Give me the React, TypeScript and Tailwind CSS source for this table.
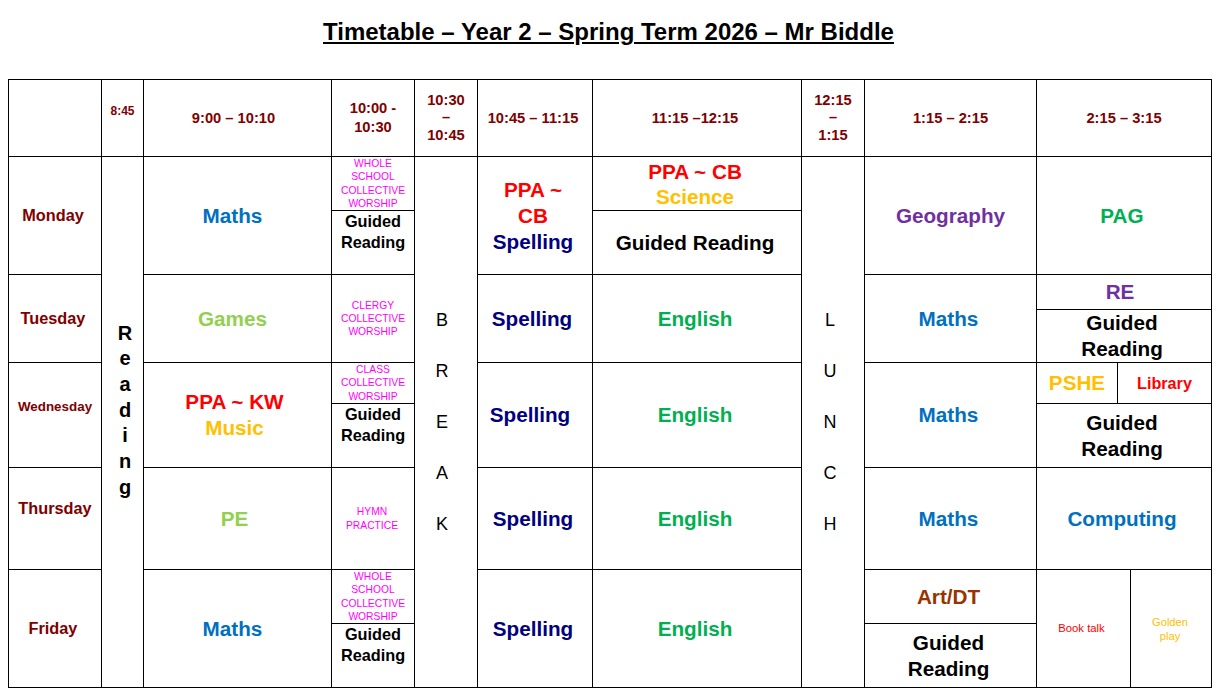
import React from "react"

const cell = "bg-white flex flex-col items-center justify-center text-center"
const headBase = `${cell} text-[#800000] font-bold`
const head = `${headBase} text-[14.7px] leading-[18px]`
const dayBase = `${cell} text-[#800000] font-bold`
const day = `${dayBase} text-[16.3px]`
const big = "font-bold text-[20.7px] leading-[26px]"
const worship = "text-[#FF00FF] text-[10.3px] leading-[13.3px]"
const gr = "font-bold text-[16.3px] leading-[21px] text-black"

function Stack({ letters, className }: { letters: string; className: string }) {
    return (
        <div className={`${cell} ${className}`}>
            {letters.split("").map((l, i) => (
                <span key={i} className="block">{l}</span>
            ))}
        </div>
    )
}

export default function App() {
    return (
        <div className="w-[1217px] h-[693px] bg-white font-['Liberation_Sans',Arial,sans-serif] pt-[18px]">
            <h1 className="text-center font-bold text-[24px] leading-[28px] underline text-black">
                Timetable – Year 2 – Spring Term 2026 – Mr Biddle
            </h1>

            <div className="ml-[8px] mt-[33px] w-[1204px] grid grid-cols-[92px_41px_187px_82px_62px_114px_208px_62px_171px_174px] grid-rows-[76px_117px_87px_104px_101px_117px] gap-px bg-black p-px">
                {/* header row */}
                <div className={cell}></div>
                <div className={`${headBase} text-[12px] leading-[14px] pb-[14px]`}>8:45</div>
                <div className={`${head} pr-[8px]`}>9:00 – 10:10</div>
                <div className={`${headBase} text-[14.7px] leading-[19px]`}>10:00 -<br />10:30</div>
                <div className={`${headBase} text-[14.7px] leading-[17.5px]`}>10:30<br />–<br />10:45</div>
                <div className={`${head} pr-[4px]`}>10:45 – 11:15</div>
                <div className={`${head} pr-[4px]`}>11:15 –12:15</div>
                <div className={`${headBase} text-[14.7px] leading-[17.5px]`}>12:15<br />–<br />1:15</div>
                <div className={head}>1:15 – 2:15</div>
                <div className={head}>2:15 – 3:15</div>

                {/* Monday */}
                <div className={`${day} pr-[4px]`}>Monday</div>
                <Stack letters="Reading" className="row-span-5 font-bold text-[20px] leading-[25.7px] text-black pb-[23px] pl-[5px]" />
                <div className={`${cell} ${big} text-[#0070C0] pr-[10px]`}>Maths</div>
                <div className="bg-white flex flex-col">
                    <div className={`${cell} ${worship} h-[54px] border-b border-black`}>
                        WHOLE<br />SCHOOL<br />COLLECTIVE<br />WORSHIP
                    </div>
                    <div className={`flex-1 bg-white text-center ${gr}`}>Guided<br />Reading</div>
                </div>
                <Stack letters="BREAK" className="row-span-5 text-[18px] leading-[51px] text-black pr-[8px]" />
                <div className={`${cell} ${big} pr-[4px]`}>
                    <span className="text-[#FF0000]">PPA ~<br />CB</span>
                    <span className="text-[#000080]">Spelling</span>
                </div>
                <div className="bg-white flex flex-col">
                    <div className={`bg-white flex flex-col items-center justify-center text-center font-bold text-[20.7px] leading-[25px] h-[54px] border-b border-black pr-[4px]`}>
                        <span className="text-[#FF0000]">PPA ~ CB</span>
                        <span className="text-[#FFC000]">Science</span>
                    </div>
                    <div className={`${cell} flex-1 ${big} text-black pr-[4px]`}>Guided Reading</div>
                </div>
                <Stack letters="LUNCH" className="row-span-5 text-[18px] leading-[51px] text-black pr-[6px]" />
                <div className={`${cell} ${big} text-[#7030A0]`}>Geography</div>
                <div className={`${cell} ${big} text-[#00B050] pr-[4px]`}>PAG</div>

                {/* Tuesday */}
                <div className={`${day} pr-[4px]`}>Tuesday</div>
                <div className={`${cell} ${big} text-[#92D050] pr-[10px]`}>Games</div>
                <div className={`${cell} ${worship}`}>CLERGY<br />COLLECTIVE<br />WORSHIP</div>
                <div className={`${cell} ${big} text-[#000080] pr-[6px]`}>Spelling</div>
                <div className={`${cell} ${big} text-[#00B050] pr-[4px]`}>English</div>
                <div className={`${cell} ${big} text-[#0070C0] pr-[4px]`}>Maths</div>
                <div className="bg-white flex flex-col">
                    <div className={`${cell} ${big} h-[36px] border-b border-black text-[#7030A0] pr-[8px]`}>RE</div>
                    <div className={`${cell} flex-1 ${big} text-black pr-[4px]`}>Guided<br />Reading</div>
                </div>

                {/* Wednesday */}
                <div className={`${dayBase} text-[13.4px] pb-[16px]`}>Wednesday</div>
                <div className={`${cell} ${big} pr-[6px]`}>
                    <span className="text-[#FF0000]">PPA ~ KW</span>
                    <span className="text-[#FFC000]">Music</span>
                </div>
                <div className="bg-white flex flex-col">
                    <div className={`${cell} ${worship} h-[41px] border-b border-black`}>
                        CLASS<br />COLLECTIVE<br />WORSHIP
                    </div>
                    <div className={`flex-1 bg-white text-center ${gr}`}>Guided<br />Reading</div>
                </div>
                <div className={`${cell} ${big} text-[#000080] pr-[10px]`}>Spelling</div>
                <div className={`${cell} ${big} text-[#00B050] pr-[4px]`}>English</div>
                <div className={`${cell} ${big} text-[#0070C0] pr-[4px]`}>Maths</div>
                <div className="bg-white flex flex-col">
                    <div className="flex h-[41px] border-b border-black">
                        <div className={`${cell} w-[81px] border-r border-black ${big} text-[#FFC000]`}>PSHE</div>
                        <div className="bg-white flex flex-col items-center justify-center text-center flex-1 font-bold text-[16.2px] text-[#FF0000]">Library</div>
                    </div>
                    <div className={`${cell} flex-1 ${big} text-black pr-[4px]`}>Guided<br />Reading</div>
                </div>

                {/* Thursday */}
                <div className={`${day} pb-[20px]`}>Thursday</div>
                <div className={`${cell} ${big} text-[#92D050] pr-[6px]`}>PE</div>
                <div className={`${cell} ${worship} pr-[2px]`}>HYMN<br />PRACTICE</div>
                <div className={`${cell} ${big} text-[#000080] pr-[4px]`}>Spelling</div>
                <div className={`${cell} ${big} text-[#00B050] pr-[4px]`}>English</div>
                <div className={`${cell} ${big} text-[#0070C0] pr-[4px]`}>Maths</div>
                <div className={`${cell} ${big} text-[#0070C0] pr-[4px]`}>Computing</div>

                {/* Friday */}
                <div className={`${day} pr-[4px]`}>Friday</div>
                <div className={`${cell} ${big} text-[#0070C0] pr-[10px]`}>Maths</div>
                <div className="bg-white flex flex-col">
                    <div className={`${cell} ${worship} h-[54px] border-b border-black`}>
                        WHOLE<br />SCHOOL<br />COLLECTIVE<br />WORSHIP
                    </div>
                    <div className={`flex-1 bg-white text-center ${gr}`}>Guided<br />Reading</div>
                </div>
                <div className={`${cell} ${big} text-[#000080] pr-[4px]`}>Spelling</div>
                <div className={`${cell} ${big} text-[#00B050] pr-[4px]`}>English</div>
                <div className="bg-white flex flex-col">
                    <div className={`${cell} ${big} h-[54px] border-b border-black text-[#993300] pr-[4px]`}>Art/DT</div>
                    <div className={`${cell} flex-1 ${big} text-black pr-[4px]`}>Guided<br />Reading</div>
                </div>
                <div className="bg-white flex">
                    <div className="bg-white flex flex-col items-center justify-center text-center w-[94px] border-r border-black text-[11.3px] text-[#FF0000] pr-[4px]">Book talk</div>
                    <div className="bg-white flex flex-col items-center justify-center text-center flex-1 text-[11.2px] leading-[14px] text-[#FFC000] pr-[2px]">Golden<br />play</div>
                </div>
            </div>
        </div>
    )
}
